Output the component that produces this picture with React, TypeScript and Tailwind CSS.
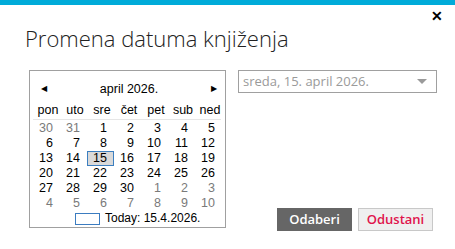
import { useMemo } from "react";

const DAY_NAMES = ["pon", "uto", "sre", "čet", "pet", "sub", "ned"];

interface Cell {
  day: number;
  inMonth: boolean;
}

// April 2026 starts on Wednesday; grid starts Monday 30 March
function useMonthCells(): Cell[] {
  return useMemo(() => {
    const cells: Cell[] = [];
    cells.push({ day: 30, inMonth: false }, { day: 31, inMonth: false });
    for (let d = 1; d <= 30; d++) cells.push({ day: d, inMonth: true });
    for (let d = 1; cells.length < 42; d++) cells.push({ day: d, inMonth: false });
    return cells;
  }, []);
}

function Calendar() {
  const cells = useMonthCells();
  return (
    <div
      className="w-[197px] h-[158px] border border-[#a0a0a0] pl-[3px] pt-[9px] text-[12.5px] leading-[15px] text-black"
      style={{ fontFamily: "'Liberation Sans', Arial, sans-serif" }}
    >
      <div className="flex items-center justify-between h-[18px] pl-[8px] pr-[8px]">
        <span className="text-[8px] leading-none">◀</span>
        <span>april 2026.</span>
        <span className="text-[8px] leading-none">▶</span>
      </div>
      <div className="grid grid-cols-[repeat(7,27px)] mt-[5px] border-b border-[#e6e6e6] pb-[1px] w-[188px]">
        {DAY_NAMES.map((n) => (
          <div key={n} className="text-center h-[15px] pl-[3px]">
            {n}
          </div>
        ))}
      </div>
      <div className="grid grid-cols-[repeat(7,27px)] mt-[1px]">
        {cells.map((c, i) => {
          const selected = c.inMonth && c.day === 15;
          return (
            <div
              key={i}
              className={
                selected
                  ? "h-[15px] text-right pr-[6px] bg-[#d9d9d9] border border-[#3c7fc0] leading-[13px]"
                  : c.inMonth
                  ? "h-[15px] text-right pr-[7px]"
                  : "h-[15px] text-right pr-[7px] text-[#7a7a7a]"
              }
            >
              {c.day}
            </div>
          );
        })}
      </div>
      <div className="flex items-center h-[15px] gap-[5px] pl-[42px] text-[12px]">
        <span className="w-[25px] h-[12px] border border-[#3b7cc0] bg-white" />
        <span>Today: 15.4.2026.</span>
      </div>
    </div>
  );
}

export default function App() {
  return (
    <div
      className="w-[455px] h-[249px] bg-white relative overflow-hidden"
      style={{ fontFamily: "'Open Sans', 'Noto Sans', sans-serif" }}
    >
      <div className="h-[5px] bg-[#00abd9]" />
      <button className="absolute right-[12px] top-[9px] text-[14px] font-bold leading-none text-black">✕</button>
      <h1 className="pl-[25px] pt-[20px] text-[22px] font-light leading-[26px] text-[#222]">Promena datuma knjiženja</h1>
      <div className="flex gap-[12px] pl-[29px] mt-[19px]">
        <Calendar />
        <div className="w-[199px] h-[23px] border border-[#a0a0a0] flex items-center justify-between pl-[4px] pr-[9px] text-[13px] text-[#9a9a9a]">
          <span>sreda, 15. april 2026.</span>
          <svg width="10" height="5" viewBox="0 0 10 5">
            <path d="M0 0 L10 0 L5 5 Z" fill="#9a9a9a" />
          </svg>
        </div>
      </div>
      <div className="absolute right-[22px] bottom-[18px] flex gap-[6px] text-[13px]">
        <button className="w-[75px] h-[23px] bg-[#666] text-white font-semibold">Odaberi</button>
        <button className="w-[75px] h-[23px] bg-[#efefef] border border-[#c8c8c8] text-[#e0134c] font-semibold">Odustani</button>
      </div>
    </div>
  );
}
